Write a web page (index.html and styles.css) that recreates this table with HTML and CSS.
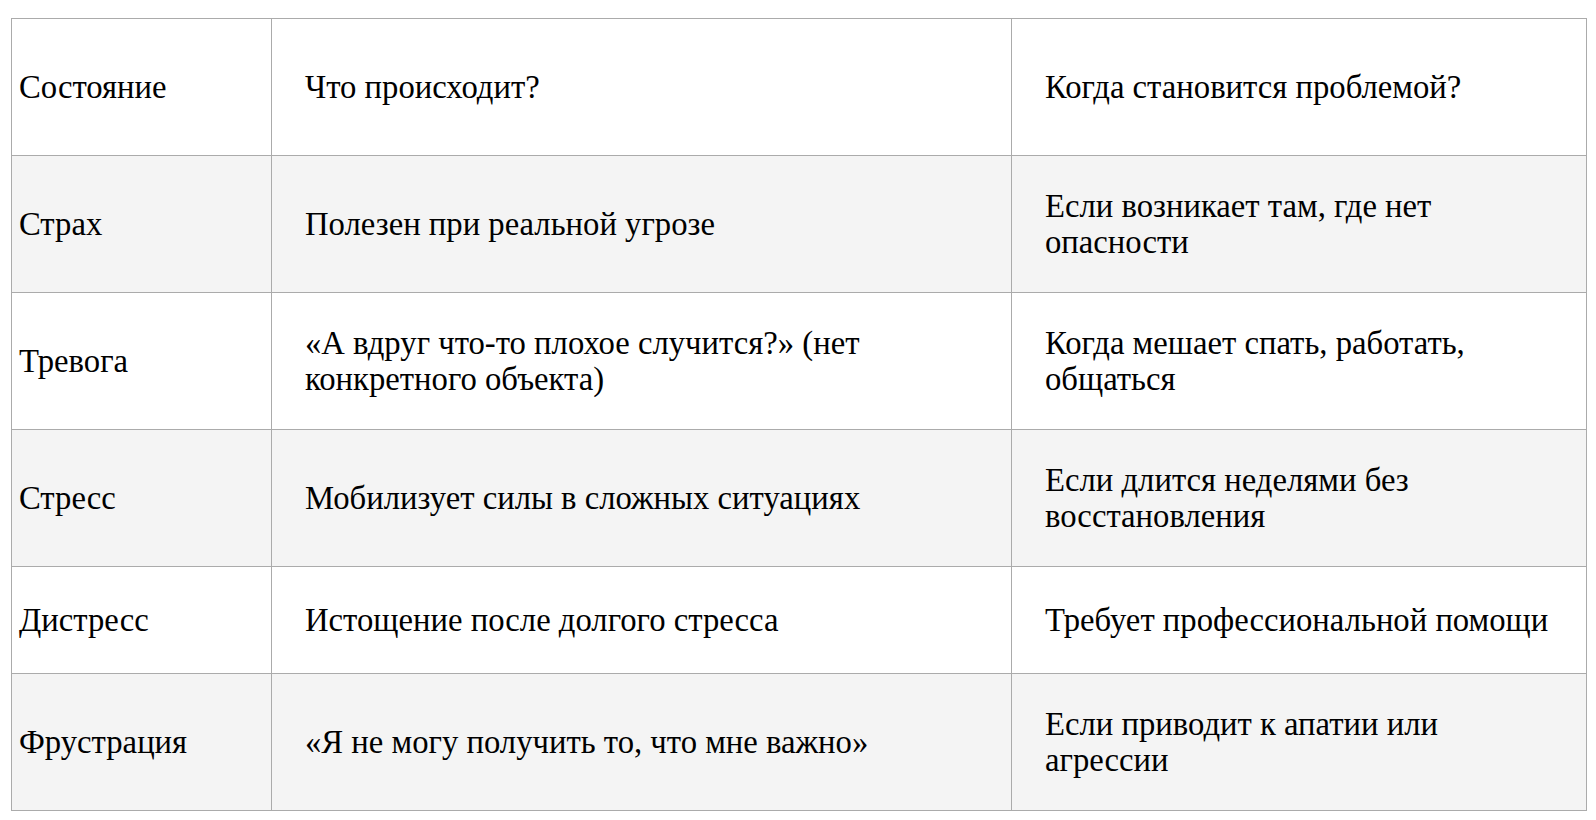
FILE: index.html
```html
<!DOCTYPE html>
<html lang="ru">
<head>
<meta charset="utf-8">
<title>Состояния</title>
<link rel="stylesheet" href="styles.css">
</head>
<body>
<table class="states">
  <colgroup>
    <col class="c1">
    <col class="c2">
    <col class="c3">
  </colgroup>
  <tr class="r-head">
    <td>Состояние</td>
    <td>Что происходит?</td>
    <td>Когда становится проблемой?</td>
  </tr>
  <tr class="r-tall alt">
    <td>Страх</td>
    <td>Полезен при реальной угрозе</td>
    <td>Если возникает там, где нет опасности</td>
  </tr>
  <tr class="r-tall">
    <td>Тревога</td>
    <td>«А вдруг что-то плохое случится?» (нет конкретного объекта)</td>
    <td>Когда мешает спать, работать, общаться</td>
  </tr>
  <tr class="r-tall alt">
    <td>Стресс</td>
    <td>Мобилизует силы в сложных ситуациях</td>
    <td>Если длится неделями без восстановления</td>
  </tr>
  <tr class="r-short">
    <td>Дистресс</td>
    <td>Истощение после долгого стресса</td>
    <td>Требует профессиональной помощи</td>
  </tr>
  <tr class="r-tall alt">
    <td>Фрустрация</td>
    <td>«Я не могу получить то, что мне важно»</td>
    <td>Если приводит к апатии или агрессии</td>
  </tr>
</table>
</body>
</html>
```

FILE: styles.css
```css
html, body {
  margin: 0;
  padding: 0;
  background: #ffffff;
}

body {
  padding: 18px 10px 8px 11px;
  font-family: "Liberation Serif", "Times New Roman", serif;
  color: #000000;
}

.states {
  width: 1575px;
  border-collapse: collapse;
  table-layout: fixed;
  font-family: "Liberation Serif", "Times New Roman", serif;
  font-size: 32.7px;
  line-height: 36px;
}

.c1 { width: 260px; }
.c2 { width: 740px; }
.c3 { width: 575px; }

.states td {
  border: 1px solid #ababab;
  vertical-align: middle;
  padding: 0 30px 0 33px;
  text-align: left;
}

.states td:first-child {
  padding-left: 7px;
  padding-right: 7px;
}

.r-head { height: 137px; }
.r-tall { height: 137px; }
.r-short { height: 107px; }

.alt { background: #f4f4f4; }
```
